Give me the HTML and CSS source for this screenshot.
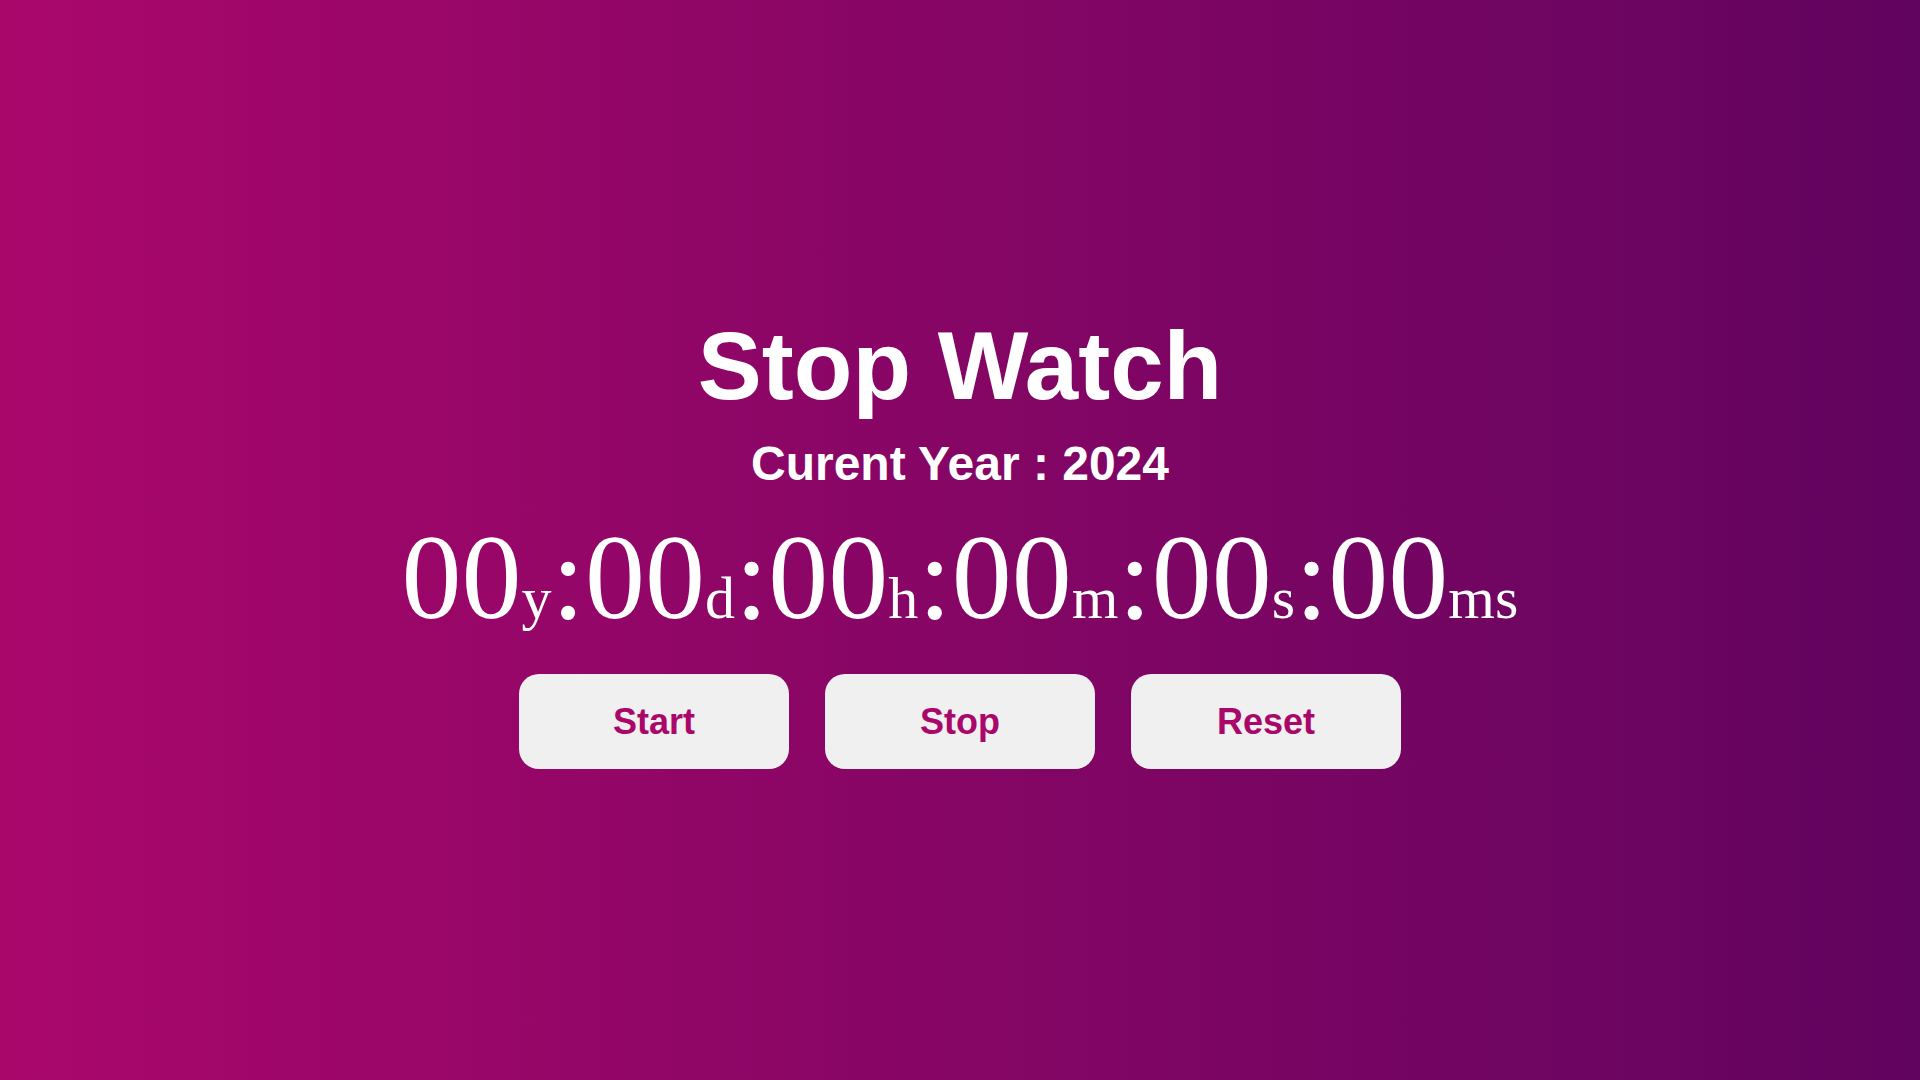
FILE: index.html
```html
<!DOCTYPE html>
<html lang="en">
<head>
<meta charset="UTF-8">
<title>Stop Watch</title>
<link rel="stylesheet" href="styles.css">
</head>
<body>
<main class="watch">
  <h1 class="title">Stop Watch</h1>
  <h2 class="year">Curent Year : 2024</h2>
  <div class="timer"><span class="num">00</span><span class="unit">y</span>:<span class="num">00</span><span class="unit">d</span>:<span class="num">00</span><span class="unit">h</span>:<span class="num">00</span><span class="unit">m</span>:<span class="num">00</span><span class="unit">s</span>:<span class="num">00</span><span class="unit">ms</span></div>
  <div class="controls">
    <button class="btn">Start</button>
    <button class="btn">Stop</button>
    <button class="btn">Reset</button>
  </div>
</main>
</body>
</html>
```
FILE: styles.css
```css
html, body {
  margin: 0;
  padding: 0;
  height: 100%;
}
body {
  background: linear-gradient(to right, #aa076b, #61045f);
  color: #ffffff;
  font-family: "Liberation Sans", Arial, sans-serif;
}
.watch {
  height: 100%;
  display: flex;
  flex-direction: column;
  align-items: center;
  justify-content: center;
}
.title {
  margin: 0;
  font-size: 96px;
  font-weight: bold;
  line-height: 110px;
}
.year {
  margin: 15px 0 0;
  font-size: 48px;
  font-weight: bold;
  line-height: 55px;
}
.timer {
  margin: 20px 0 0;
  font-family: "Liberation Serif", "Times New Roman", serif;
  font-size: 120px;
  line-height: 133px;
  white-space: nowrap;
}
.unit {
  font-size: 60px;
  line-height: 1;
}
.controls {
  margin-top: 30px;
  display: flex;
  gap: 36px;
}
.btn {
  width: 270px;
  height: 95px;
  border: none;
  border-radius: 20px;
  background: #f0f0f0;
  color: #aa076b;
  font-family: "Liberation Sans", Arial, sans-serif;
  font-size: 36px;
  font-weight: bold;
  padding: 0;
  cursor: pointer;
}
```
